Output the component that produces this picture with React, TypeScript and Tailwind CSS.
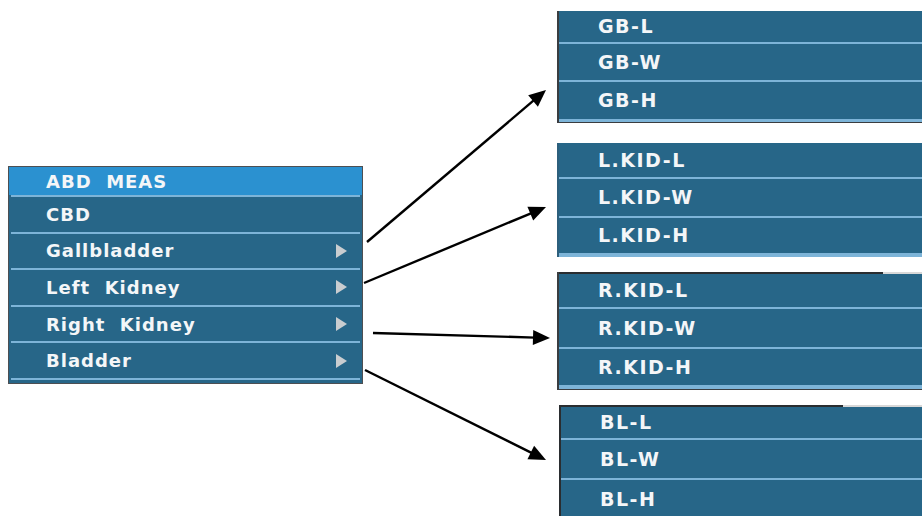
import React from "react";

type Arrow = { x1: number; y1: number; x2: number; y2: number };

const arrows: Arrow[] = [
  { x1: 367, y1: 242, x2: 546, y2: 90 },
  { x1: 364, y1: 283, x2: 546, y2: 207 },
  { x1: 373, y1: 333, x2: 550, y2: 338 },
  { x1: 365, y1: 370, x2: 546, y2: 460 },
];

const mainItems = [
  { label: "CBD", sub: false },
  { label: "Gallbladder", sub: true },
  { label: "Left  Kidney", sub: true },
  { label: "Right  Kidney", sub: true },
  { label: "Bladder", sub: true },
];

const font = { fontFamily: '"DejaVu Sans", Verdana, sans-serif' };

const ArrowHead: React.FC<{ a: Arrow }> = ({ a }) => {
  const dx = a.x2 - a.x1;
  const dy = a.y2 - a.y1;
  const len = Math.hypot(dx, dy);
  const ux = dx / len;
  const uy = dy / len;
  const bx = a.x2 - ux * 17;
  const by = a.y2 - uy * 17;
  const nx = -uy * 7.5;
  const ny = ux * 7.5;
  return (
    <g>
      <line x1={a.x1} y1={a.y1} x2={bx + ux * 2} y2={by + uy * 2} stroke="#000" strokeWidth={2.4} />
      <polygon points={`${a.x2},${a.y2} ${bx + nx},${by + ny} ${bx - nx},${by - ny}`} fill="#000" />
    </g>
  );
};

const SubRow: React.FC<{ label: string; h: string; last?: boolean }> = ({ label, h, last }) => (
  <div className={`flex flex-col ${h}`}>
    <div className="flex-1 flex items-center pl-[39px] text-[19px] font-bold tracking-[1.5px] text-[#f4f6f8]" style={font}>
      {label}
    </div>
    {!last && <div className="h-[2px] bg-[#7db4d8]" />}
  </div>
);

export default function App() {
  return (
    <div className="relative w-[922px] h-[516px] bg-white overflow-hidden flex">
      {/* main menu */}
      <div className="w-[557px] shrink-0 pl-[8px] pt-[166px]">
        <div className="w-[355px] border border-[#4d4f52] bg-[#276688]">
          <div className="h-[30px] flex flex-col">
            <div className="flex-1 flex items-center bg-[#2b91d0] pl-[37px] text-[18px] font-bold tracking-[1px] text-[#f4f6f8] whitespace-pre" style={font}>
              ABD  MEAS
            </div>
            <div className="h-[2px] mx-[2px] bg-[#7db4d8]" />
          </div>
          {mainItems.map((it) => (
            <div key={it.label} className="h-[36.6px] flex flex-col">
              <div className="flex-1 flex items-center justify-between pl-[37px] pr-[15px]">
                <span className="text-[18px] font-bold tracking-[1px] text-[#f4f6f8] whitespace-pre" style={font}>
                  {it.label}
                </span>
                {it.sub && (
                  <span className="w-0 h-0 border-y-[7.5px] border-y-transparent border-l-[11px] border-l-[#c9cdd0]" />
                )}
              </div>
              <div className="h-[2px] mx-[2px] bg-[#7db4d8]" />
            </div>
          ))}
          <div className="h-[3px]" />
        </div>
      </div>

      {/* sub menus */}
      <div className="flex-1 flex flex-col pt-[11px]">
        <div className="h-[112px] bg-[#276688] border-l-2 border-l-[#3a3d40] border-b border-b-[#3a3d40] flex flex-col">
          <SubRow label="GB-L" h="h-[33px]" />
          <SubRow label="GB-W" h="h-[39px]" />
          <SubRow label="GB-H" h="h-[39px]" />
          <div className="h-[1px] bg-[#7db4d8]" />
        </div>
        <div className="mt-[20px] h-[114px] bg-[#276688] border-l-2 border-l-[#2d5f7c] flex flex-col">
          <SubRow label="L.KID-L" h="h-[36px]" />
          <SubRow label="L.KID-W" h="h-[39px]" />
          <SubRow label="L.KID-H" h="h-[37px]" />
          <div className="h-[2px] bg-[#7db4d8]" />
        </div>
        <div className="mt-[15px] h-[118px] flex flex-col bg-[#276688] border-l-2 border-l-[#3a3d40] border-b border-b-[#3a3d40]">
          <div className="h-[2px] flex">
            <div className="w-[324px] bg-[#2a2d30]" />
            <div className="flex-1 bg-[#d8d8d8]" />
          </div>
          <SubRow label="R.KID-L" h="h-[35px]" />
          <SubRow label="R.KID-W" h="h-[40px]" />
          <SubRow label="R.KID-H" h="h-[38px]" />
          <div className="h-[2px] bg-[#7db4d8]" />
        </div>
        <div className="mt-[15px] ml-[2px] flex-1 flex flex-col bg-[#276688] border-l-2 border-l-[#2a2d30]">
          <div className="h-[2px] flex">
            <div className="w-[282px] bg-[#2a2d30]" />
            <div className="flex-1 bg-[#d8d8d8]" />
          </div>
          <SubRow label="BL-L" h="h-[33px]" />
          <SubRow label="BL-W" h="h-[40px]" />
          <SubRow label="BL-H" h="h-[38px]" last />
        </div>
      </div>

      <svg className="absolute inset-0 pointer-events-none" width={922} height={516}>
        {arrows.map((a, i) => (
          <ArrowHead key={i} a={a} />
        ))}
      </svg>
    </div>
  );
}
